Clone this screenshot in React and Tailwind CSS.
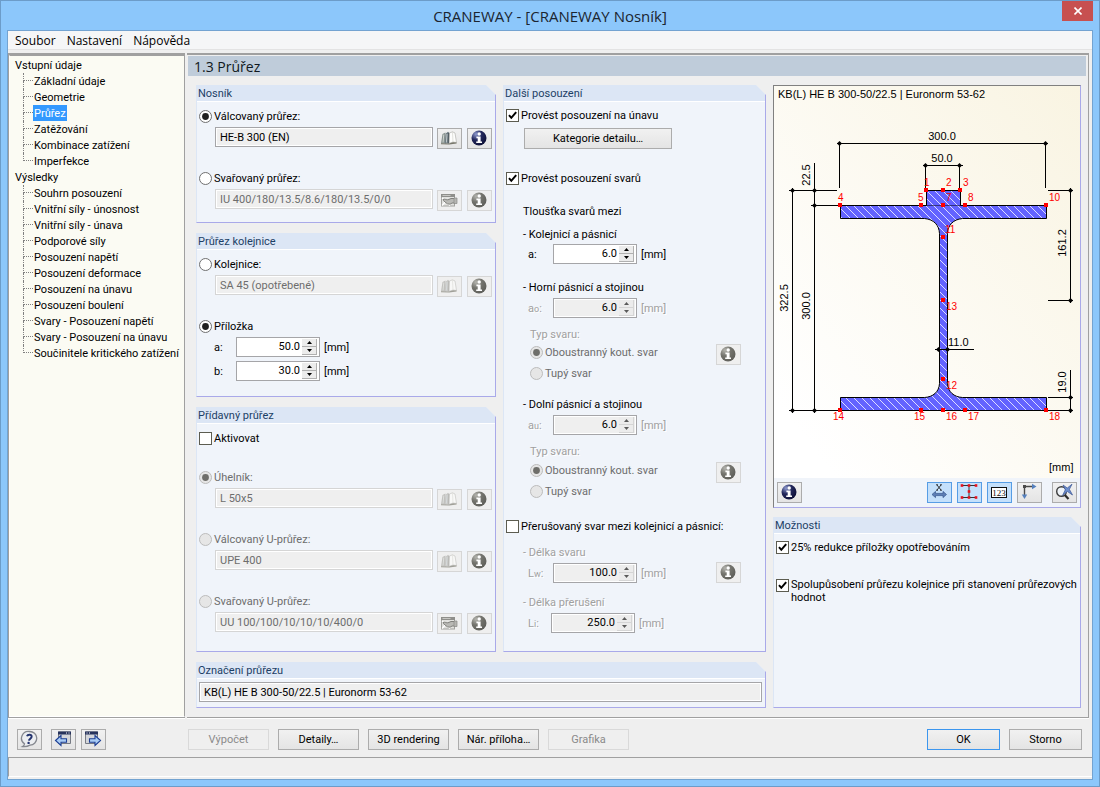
import { useId, useState } from "react";

/* ---------- icons ---------- */

function InfoIcon({ muted }) {
  const id = useId();
  return (
    <svg width="18" height="18" viewBox="0 0 18 18" aria-hidden="true">
      <defs>
        <radialGradient id={id} cx="0.3" cy="0.25" r="0.85">
          <stop offset="0" stopColor={muted ? "#b4b4ae" : "#8f9bd0"} />
          <stop offset="0.45" stopColor={muted ? "#74746e" : "#23285c"} />
          <stop offset="1" stopColor={muted ? "#5c5c57" : "#0b0d33"} />
        </radialGradient>
      </defs>
      <circle cx="9" cy="9" r="7.5" fill={`url(#${id})`} />
      <circle cx="9.2" cy="5" r="1.7" fill="#fff" />
      <path d="M6.4 7.6h4.2v4.8h1.4v1.6H6.2v-1.6h1.5V9.2H6.4z" fill="#fff" />
    </svg>
  );
}

function BookIcon({ muted }) {
  return (
    <svg width="18" height="16" viewBox="0 0 18 16" aria-hidden="true" opacity={muted ? 0.65 : 1}>
      <path d="M1 13.500 2.500 4 5.500 2.500 6 13.500z" fill={muted ? "#a9a9a5" : "#87928f"} />
      <path d="M3.800 4.500 3 12.500" stroke="#d9dcd8" strokeWidth="0.9" />
      <path d="M4.800 13.500 5.800 3.500 8 1.800 9.500 3 9 13.500z" fill={muted ? "#b4b4b0" : "#6d7a80"} />
      <path d="M7 4 6.400 12.500" stroke="#c9d0d2" strokeWidth="0.900" />
      <path d="M8.200 3 9.500 3 9 13 8 13.500z" fill={muted ? "#9a9a96" : "#4a555c"} />
      <path d="M9.500 3 12.500 1.800 15 3 16.500 12.500 13 12 9.200 13.200z" fill="#fdfdfc" stroke="#a8a8a2" strokeWidth="0.6" />
      <path d="M12.500 1.800 13 12" stroke="#d5d5cf" strokeWidth="0.700" />
      <path d="M1 13.200 9 13.400 13 12.300 16.600 12.400v1.200L9.200 14.400 1 14.200z" fill="#77766a" />
    </svg>
  );
}

function EditIcon() {
  return (
    <svg width="18" height="16" viewBox="0 0 18 16" aria-hidden="true">
      <rect x="1.500" y="2.500" width="13" height="11.500" fill="#e2e2df" stroke="#a2a29e" />
      <path d="M1 2h14v3H1z" fill="#8f8f8b" />
      <path d="M2.500 3.500h8" stroke="#c6c6c2" />
      <path d="M2 13.500 8 7M2 6l8 7.500" stroke="#fff" strokeWidth="1.200" />
      <path d="M3 7.500c2-.8 3.500.6 5 .3l3-1.300h3.500v4.500H12c-1.500 1.600-4 1.600-6-.2L3.500 8.600z" fill="#b9b9b5" stroke="#777773" strokeWidth="0.9" />
      <path d="M14 6h3v5.500h-3z" fill="#b5b5b1" stroke="#8a8a86" strokeWidth="0.700" />
    </svg>
  );
}

function HelpIcon() {
  return (
    <svg width="18" height="18" viewBox="0 0 18 18" aria-hidden="true">
      <path d="M9.500 1.500a7 6.800 0 0 1 .5 13.600C8 16.200 5 16.800 2.600 16.500c1.200-.6 1.800-1.600 1.900-2.700A6.900 6.800 0 0 1 9.500 1.500z" fill="#eceef1" stroke="#85888f" strokeWidth="1.300" />
      <path d="M7 6.300C7.600 4.100 12 4 11.600 6.800 11.300 8.700 9.200 8.700 8.900 10.600" fill="none" stroke="#24346f" strokeWidth="2" />
      <circle cx="8.600" cy="12.900" r="1.200" fill="#24346f" />
    </svg>
  );
}

function PageArrowIcon({ back }) {
  return (
    <svg width="18" height="18" viewBox="0 0 18 18" aria-hidden="true">
      <g transform={back ? undefined : "translate(18 0) scale(-1 1)"}>
        <path d="M4.500 2h12v11.500h-12z" fill="#d3d5da" stroke="#777b84" />
        <path d="M4 1.500h13v3H4z" fill="#26325c" />
        <path d="M12 3h1M14.500 3h1" stroke="#fff" />
        <path d="M1.500 10.500 7 5.500v3.300h5.500v3.400H7v3.300z" fill="#a9ccf5" stroke="#1e3f94" strokeWidth="1.100" />
      </g>
    </svg>
  );
}

function DimensionIcon() {
  return (
    <svg width="18" height="18" viewBox="0 0 18 18" aria-hidden="true">
      <path d="M7 2 11 7M11 2 7 7M6 1.800h2M10 1.800h2M6 7.200h2M10 7.200h2" stroke="#222" strokeWidth="0.900" />
      <path d="M2 11.500 5.500 8.400v2h7.500v-2l3.500 3.100-3.500 3.100v-2H5.500v2z" fill="#5d7fb5" stroke="#34558e" strokeWidth="0.700" />
    </svg>
  );
}

function SectionIcon() {
  const pts = [[2, 2.500], [9, 2.500], [16, 2.500], [9, 8.500], [2, 14.500], [9, 14.500], [16, 14.500]];
  return (
    <svg width="18" height="18" viewBox="0 0 18 18" aria-hidden="true">
      <path d="M2 2.500h14M2 14.500h14M9 2.500v12" stroke="#333" />
      {pts.map(([x, y]) => (
        <rect key={`${x}-${y}`} x={x - 1.300} y={y - 1.300} width="2.600" height="2.600" fill="#e8101c" />
      ))}
    </svg>
  );
}

function NumbersIcon() {
  return (
    <svg width="18" height="18" viewBox="0 0 18 18" aria-hidden="true">
      <rect x="1.500" y="4.500" width="15" height="10" fill="#fff" stroke="#111" />
      <text x="9" y="13" textAnchor="middle" fontSize="9" fontFamily="Liberation Serif, serif" fill="#111">123</text>
    </svg>
  );
}

function AxesIcon() {
  return (
    <svg width="18" height="18" viewBox="0 0 18 18" aria-hidden="true">
      <path d="M4.500 13V3.500H14" fill="none" stroke="#4a4a4a" strokeWidth="1.400" />
      <path d="M3 2h3v3H3z" fill="#4a4a4a" />
      <path d="M12 .8 16.500 3.500 12 6.200z" fill="#5580bd" />
      <path d="M1.800 11.500 4.500 16l2.700-4.500z" fill="#5580bd" />
    </svg>
  );
}

function ResetViewIcon() {
  return (
    <svg width="18" height="18" viewBox="0 0 18 18" aria-hidden="true">
      <circle cx="6.500" cy="8.500" r="4.800" fill="#eef3f8" stroke="#3c3c3c" strokeWidth="1.400" />
      <path d="M9.800 12 13.500 16" stroke="#2b2b2b" strokeWidth="2.200" />
      <path d="M8 2 12.300 5 17 1.200 14.400 6.300 17.500 12l-5.200-3.600L7.500 12.500l2.800-5.700z" fill="#6d8fce" stroke="#3a5594" strokeWidth="0.700" />
    </svg>
  );
}

/* ---------- controls ---------- */

const TEXT = {
  normal: "text-black",
  muted: "text-[#6d6d6d]",
  etched: "text-[#a0a0a0] [text-shadow:1px_1px_0_#ffffff]",
};

function Line({ className = "", children }) {
  return <p className={`h-4 whitespace-nowrap pt-px ${className}`}>{children}</p>;
}

function Choice({ type, label, name, checked, disabled, mutedText, lines }) {
  const id = useId();
  const radio = type === "radio";
  const shape = radio ? "rounded-full" : "";
  const tone = disabled
    ? "border-[#bcbcbc] bg-[#e6e6e6]"
    : radio
      ? "border-[#707070] bg-white"
      : "border-[#5c5c50] bg-white";
  const [on, setOn] = useState(Boolean(checked));
  const extra = radio
    ? { defaultChecked: checked }
    : { checked: on, onChange: () => setOn(!on) };
  return (
    <div className={`flex gap-[2px] ${lines ? "items-start" : "h-4 items-center"}`}>
      <span className={`grid size-[13px] shrink-0 ${lines ? "mt-[2px]" : ""}`}>
        <input
          id={id}
          type={type}
          name={name}
          disabled={disabled}
          className={`peer col-start-1 row-start-1 m-0 size-[13px] appearance-none border ${shape} ${tone}`}
          {...extra}
        />
        <svg
          viewBox="0 0 13 13"
          className="pointer-events-none invisible col-start-1 row-start-1 size-[13px] peer-checked:visible"
          aria-hidden="true"
        >
          {radio ? (
            <circle cx="6.500" cy="6.500" r="3.400" fill={disabled ? "#6e6e6a" : "#1f1f1f"} />
          ) : (
            <path d="M3 6.200 5.300 8.800 10.200 3.200" fill="none" stroke="#000" strokeWidth="2" />
          )}
        </svg>
      </span>
      <label
        htmlFor={id}
        className={`${lines ? "pt-px leading-[13px]" : "whitespace-nowrap pt-0.5"} ${mutedText ? TEXT.muted : TEXT.normal}`}
      >
        {label}
      </label>
    </div>
  );
}

function Field({ value, label, disabled }) {
  return (
    <input
      type="text"
      aria-label={label}
      defaultValue={value}
      readOnly
      disabled={disabled}
      className={`h-5 min-w-0 flex-1 border bg-[#efefef] px-1 shadow-[inset_0_0_0_1px_#ffffff] ${
        disabled ? "border-[#d5d5d5] text-[#6d6d6d]" : "border-[#a5a5a8] text-black"
      }`}
    />
  );
}

function IconButton({ label, disabled, active, children }) {
  const tone = disabled
    ? "border-[#d6d6d6] bg-[#efefef]"
    : active
      ? "border-[#569de5] bg-[#c4e0fb]"
      : "border-[#acacac] bg-linear-to-b from-[#f1f1f1] to-[#e4e4e4]";
  return (
    <button
      type="button"
      aria-label={label}
      disabled={disabled}
      className={`flex h-[21px] w-[25px] shrink-0 items-center justify-center border pr-px pb-px ${tone}`}
    >
      {children}
    </button>
  );
}

function PushButton({ children, width = "w-[81px]", disabled, primary }) {
  const tone = disabled
    ? "border-[#d9d9d9] bg-[#efefef] text-[#8a8a8a]"
    : primary
      ? "border-[#3c96ee] bg-linear-to-b from-[#f1f1f1] to-[#e4e4e4]"
      : "border-[#acacac] bg-linear-to-b from-[#f1f1f1] to-[#e4e4e4]";
  return (
    <button type="button" disabled={disabled} className={`h-[21px] whitespace-nowrap border pt-px ${width} ${tone}`}>
      {children}
    </button>
  );
}

function Stepper({ label, value, disabled, labelWidth }) {
  const id = useId();
  const [amount, setAmount] = useState(value);
  const step = (d) => setAmount((Number(amount) + d).toFixed(1));
  const arrow = disabled ? "#5a5a5a" : "#000";
  const btn = `flex h-[8px] w-[15px] items-center justify-center border-r border-b bg-[#ececec] ${
    disabled ? "border-[#d5d5d5]" : "border-[#b0b0b0]"
  }`;
  return (
    <div className="flex h-5 items-center">
      <label htmlFor={id} className={`pt-0.5 ${labelWidth} ${disabled ? TEXT.etched : TEXT.normal}`}>
        {label}
      </label>
      <span
        className={`flex h-5 w-[84px] items-center border border-[#a5a5a8] pr-[2px] ${
          disabled ? "bg-[#efefef] shadow-[inset_0_0_0_1px_#ffffff]" : "bg-white"
        }`}
      >
        <input
          id={id}
          type="text"
          value={amount}
          disabled={disabled}
          onChange={(e) => setAmount(e.target.value)}
          className="h-4 min-w-0 flex-1 bg-transparent pr-[2px] text-right text-black"
        />
        <span className="flex flex-col">
          <button type="button" aria-label="+" disabled={disabled} onClick={() => step(1)} className={btn}>
            <svg width="5" height="3" viewBox="0 0 5 3"><path d="M0 3 2.500 0 5 3z" fill={arrow} /></svg>
          </button>
          <button type="button" aria-label="-" disabled={disabled} onClick={() => step(-1)} className={btn}>
            <svg width="5" height="3" viewBox="0 0 5 3"><path d="M0 0 2.500 3 5 0z" fill={arrow} /></svg>
          </button>
        </span>
      </span>
      <span className={`pt-0.5 pl-1 ${disabled ? TEXT.etched : TEXT.normal}`}>[mm]</span>
    </div>
  );
}

function Group({ title, className = "", children }) {
  return (
    <section
      className={`flex flex-col border-r border-b border-l border-r-[#a9a9e9] border-b-[#a9a9e9] border-l-[#dce6f5] bg-[#f0f4fa] [clip-path:polygon(0_0,calc(100%-10px)_0,100%_10px,100%_100%,0_100%)] ${className}`}
    >
      <h2 className="h-[17px] border-b border-white bg-[#dce6f5] pt-px pl-px leading-4 text-[#1d3f66]">{title}</h2>
      {children}
    </section>
  );
}

function SectionPicker({ label, value, name, checked, fieldDisabled, radioDisabled, edit }) {
  return (
    <div className="flex flex-col gap-[3px]">
      <Choice type="radio" name={name} label={label} checked={checked} disabled={radioDisabled} mutedText={radioDisabled} />
      <div className="flex h-[22px] items-start pl-4">
        <Field value={value} label={label} disabled={fieldDisabled} />
        <div className="flex gap-[5px] pt-px pl-1">
          <IconButton label={edit ? "Upravit" : "Knihovna"} disabled={fieldDisabled}>
            {edit ? <EditIcon /> : <BookIcon muted={fieldDisabled} />}
          </IconButton>
          <IconButton label="Informace" disabled={fieldDisabled}>
            <InfoIcon muted={fieldDisabled} />
          </IconButton>
        </div>
      </div>
    </div>
  );
}

function WeldType({ name, gap = "gap-[2px]" }) {
  return (
    <div className={`mt-2 flex flex-col pr-6 pl-6 ${gap}`}>
      <Line className={TEXT.etched}>Typ svaru:</Line>
      <div className="flex items-start justify-between">
        <div className="flex flex-col gap-[5px]">
          <Choice type="radio" name={name} label="Oboustranný kout. svar" checked disabled mutedText />
          <Choice type="radio" name={name} label="Tupý svar" disabled mutedText />
        </div>
        <IconButton label="Informace" disabled>
          <InfoIcon muted />
        </IconButton>
      </div>
    </div>
  );
}

/* ---------- navigation ---------- */

const TREE = [
  {
    title: "Vstupní údaje",
    items: ["Základní údaje", "Geometrie", "Průřez", "Zatěžování", "Kombinace zatížení", "Imperfekce"],
  },
  {
    title: "Výsledky",
    items: [
      "Souhrn posouzení",
      "Vnitřní síly - únosnost",
      "Vnitřní síly - únava",
      "Podporové síly",
      "Posouzení napětí",
      "Posouzení deformace",
      "Posouzení na únavu",
      "Posouzení boulení",
      "Svary - Posouzení napětí",
      "Svary - Posouzení na únavu",
      "Součinitele kritického zatížení",
    ],
  },
];

function Tree() {
  return (
    <nav className="flex-1 border border-white border-t-[#a0a0a0] border-r-[#a0a0a0] bg-[#fbfbf3] pt-px pl-[5px]">
      <ul>
        {TREE.map((branch) => (
          <li key={branch.title}>
            <Line>{branch.title}</Line>
            <ul className="pl-2">
              {branch.items.map((item, i) => (
                <li key={item} className="flex h-4">
                  <span className="flex w-[10px] shrink-0 flex-col" aria-hidden="true">
                    <span className="h-2 border-b border-l border-dotted border-[#808080]" />
                    {i < branch.items.length - 1 && (
                      <span className="h-2 border-l border-dotted border-[#808080]" />
                    )}
                  </span>
                  <a
                    href="#"
                    className={`h-4 whitespace-nowrap px-px pt-px ${item === "Průřez" ? "bg-[#3399ff] text-white" : ""}`}
                  >
                    {item}
                  </a>
                </li>
              ))}
            </ul>
          </li>
        ))}
      </ul>
    </nav>
  );
}

/* ---------- cross-section drawing ---------- */

const POINTS = [
  [1, 152, 104, 150, 100],
  [2, 169, 104, 172, 100],
  [3, 186, 104, 189, 100],
  [4, 66, 119, 64, 115],
  [5, 147, 119, 144, 115],
  [7, 169, 119, 172, 115],
  [8, 191, 119, 194, 115],
  [10, 272, 119, 275, 115],
  [11, 169, 151, 171, 147],
  [13, 169, 214, 172, 224],
  [12, 169, 293, 172, 303],
  [14, 66, 324, 59, 334],
  [15, 147, 324, 140, 334],
  [16, 169, 324, 172, 334],
  [17, 191, 324, 194, 334],
  [18, 272, 324, 275, 334],
];

const DOTS = [
  [65.500, 57.500], [271.500, 57.500], [151.500, 79.500], [185.500, 79.500],
  [40.500, 104.500], [40.500, 119.500], [40.500, 324.500], [18.500, 104.500], [18.500, 324.500],
  [296.500, 104.500], [296.500, 214.500], [296.500, 311.500], [296.500, 324.500],
  [164.500, 263.500], [173.500, 263.500],
];

function SectionDrawing() {
  return (
    <svg viewBox="0 0 306 392" className="block h-auto w-full" fontFamily="Liberation Sans, sans-serif" role="img" aria-label="Průřez">
      <defs>
        <linearGradient id="paper" x1="0" y1="1" x2="1" y2="0">
          <stop offset="0.100" stopColor="#ffffff" />
          <stop offset="1" stopColor="#f9f4e2" />
        </linearGradient>
        <pattern id="hatch" width="8" height="8" patternUnits="userSpaceOnUse">
          <rect width="8" height="8" fill="#6363ff" />
          <path d="M-1-1 9 9M-1 7l2 2M7-1l2 2" stroke="#dcdcff" strokeWidth="1" />
        </pattern>
      </defs>
      <rect width="306" height="392" fill="url(#paper)" />
      <path
        d="M66.500 119.500H272.500V132.500H188.500C179 133.500 174 139 173.500 147.500V297.500C174 306 180 311 188.500 311.500H272.500V324.500H66.500V311.500H150.500C159 311 165 306 165.500 297.500V147.500C165 139 160 133.500 150.500 132.500H66.500Z"
        fill="url(#hatch)"
        stroke="#000"
      />
      <path d="M152.500 119.500V104.500H186.500V119.500" fill="url(#hatch)" stroke="#000" />
      <path
        d="M63 57.500H274M65.500 57V102M271.500 57V102M149 79.500H189M151.500 79V104M185.500 79V104M40.500 77V327M18.500 102V327M15 104.500H63M37 119.500H66M15 324.500H66M296.500 102V217M274 104.500H299M274 214.500H299M296.500 284V327M274 311.500H299M274 324.500H299M161 263.500H200"
        stroke="#000"
      />
      {DOTS.map(([x, y]) => (
        <path key={`${x}-${y}`} d={`M${x - 2.500} ${y}L${x} ${y - 2.500}L${x + 2.500} ${y}L${x} ${y + 2.500}Z`} />
      ))}
      {POINTS.map(([n, x, y, tx, ty]) => (
        <g key={n} fill="#ff0000">
          <rect x={x - 2} y={y - 2} width="4" height="4" />
          <text x={tx} y={ty} fontSize="10">{n}</text>
        </g>
      ))}
      <g fontSize="11" fill="#000">
        <text x="4" y="12">KB(L) HE B 300-50/22.5 | Euronorm 53-62</text>
        <text x="168" y="54" textAnchor="middle">300.0</text>
        <text x="168" y="76" textAnchor="middle">50.0</text>
        <text x="174" y="260">11.0</text>
        <text x="275" y="385">[mm]</text>
        <text transform="translate(36 89) rotate(-90)" textAnchor="middle">22.5</text>
        <text transform="translate(14 212) rotate(-90)" textAnchor="middle">322.5</text>
        <text transform="translate(36 220) rotate(-90)" textAnchor="middle">300.0</text>
        <text transform="translate(292 157) rotate(-90)" textAnchor="middle">161.2</text>
        <text transform="translate(292 296) rotate(-90)" textAnchor="middle">19.0</text>
      </g>
    </svg>
  );
}

/* ---------- page ---------- */

export default function App() {
  return (
    <div className="flex min-h-screen flex-col border border-[#6c9cc9] bg-[#8cc7fb] px-1.5 pb-1.5 font-['Roboto','Noto_Sans',sans-serif] text-[11px] leading-4 text-black">
      <header className="grid h-[29px] grid-cols-[1fr_auto_1fr] items-center">
        <h1 className="col-start-2 font-['Open_Sans',sans-serif] text-[15px] text-[#1b2530]">
          CRANEWAY - [CRANEWAY Nosník]
        </h1>
        <button
          type="button"
          aria-label="Zavřít"
          className="flex h-5 w-[31px] items-center justify-center self-start justify-self-end bg-[#c75050]"
        >
          <svg width="8" height="8" viewBox="0 0 8 8" aria-hidden="true">
            <path d="M.5.5l7 7M7.500.5l-7 7" stroke="#fff" strokeWidth="1.600" />
          </svg>
        </button>
      </header>

      <div className="flex flex-1 flex-col border border-[#73a3d1] bg-[#efefef]">
        <nav className="mb-[3px] flex h-[19px] items-center gap-[11px] border-b border-[#e3e3e3] bg-[#f5f6f7] px-[7px] pt-px font-['Open_Sans',sans-serif] text-xs">
          <button type="button">Soubor</button>
          <button type="button">Nastavení</button>
          <button type="button">Nápověda</button>
        </nav>

        <div className="flex flex-1">
          <aside className="flex w-[179px] shrink-0 flex-col pr-[2px]">
            <div className="flex flex-1 flex-col border-t-2 border-b border-l border-[#a0a0a0]">
              <Tree />
            </div>
            <div className="h-px bg-white" />
          </aside>

          <main className="mr-[3px] flex min-w-0 flex-1 flex-col border-b border-white">
            <div className="flex flex-1 flex-col border-t-2 border-r border-b border-[#a0a0a0]">
              <h2 className="mt-px mr-[2px] ml-px h-5 bg-[#bfccda] pl-[6px] font-['Open_Sans',sans-serif] text-sm leading-[21px] text-[#101820]">
                1.3 Průřez
              </h2>

              <div className="grid flex-1 grid-cols-[570fr_308fr] gap-[7px] pt-[9px] pr-[7px] pb-[9px] pl-[9px]">
                <div className="flex flex-col gap-[10px]">
                  <div className="grid flex-1 grid-cols-[300fr_263fr] gap-[7px]">
                    <div className="flex flex-col gap-[10px]">
                      <Group title="Nosník">
                        <div className="flex flex-col gap-[21px] pt-[6px] pr-[3px] pb-[11px] pl-[2px]">
                          <SectionPicker name="beam" label="Válcovaný průřez:" value="HE-B 300 (EN)" checked />
                          <SectionPicker name="beam" label="Svařovaný průřez:" value="IU 400/180/13.5/8.6/180/13.5/0/0" fieldDisabled edit />
                        </div>
                      </Group>

                      <Group title="Průřez kolejnice">
                        <div className="flex flex-col gap-[21px] pt-[6px] pr-[3px] pb-[15px] pl-[2px]">
                          <SectionPicker name="rail" label="Kolejnice:" value="SA 45 (opotřebené)" fieldDisabled />
                          <div className="flex flex-col gap-[3px]">
                            <Choice type="radio" name="rail" label="Příložka" checked />
                            <div className="flex flex-col gap-1 pl-[15px]">
                              <Stepper label="a:" value="50.0" labelWidth="w-[22px]" />
                              <Stepper label="b:" value="30.0" labelWidth="w-[22px]" />
                            </div>
                          </div>
                        </div>
                      </Group>

                      <Group title="Přídavný průřez" className="flex-1">
                        <div className="flex flex-col pt-[6px] pr-[3px] pl-[2px]">
                          <Choice type="checkbox" label="Aktivovat" />
                          <div className="mt-[23px] flex flex-col gap-[21px]">
                            <SectionPicker name="extra" label="Úhelník:" value="L 50x5" checked fieldDisabled radioDisabled />
                            <SectionPicker name="extra" label="Válcovaný U-průřez:" value="UPE 400" fieldDisabled radioDisabled />
                            <SectionPicker name="extra" label="Svařovaný U-průřez:" value="UU 100/100/10/10/10/400/0" fieldDisabled radioDisabled edit />
                          </div>
                        </div>
                      </Group>
                    </div>

                    <Group title="Další posouzení">
                      <div className="flex flex-col pt-[5px] pl-[2px]">
                        <Choice type="checkbox" label="Provést posouzení na únavu" checked />
                        <div className="mt-[5px] flex pl-[18px]">
                          <PushButton width="w-[148px]">Kategorie detailu…</PushButton>
                        </div>
                        <div className="mt-[21px]">
                          <Choice type="checkbox" label="Provést posouzení svarů" checked />
                        </div>
                        <Line className="mt-[17px] pl-[17px]">Tloušťka svarů mezi</Line>
                        <Line className="mt-[7px] pl-[17px]">- Kolejnicí a pásnicí</Line>
                        <div className="mt-[2px] pl-[22px]">
                          <Stepper label="a:" value="6.0" labelWidth="w-[25px]" />
                        </div>
                        <Line className="mt-[15px] pl-[17px]">- Horní pásnicí a stojinou</Line>
                        <div className="mt-[3px] pl-[22px]">
                          <Stepper label={<>a<span className="text-[9px]">o</span>:</>} value="6.0" disabled labelWidth="w-[25px]" />
                        </div>
                        <WeldType name="weld-top" />
                        <Line className="mt-[15px] pl-[17px]">- Dolní pásnicí a stojinou</Line>
                        <div className="mt-[3px] pl-[22px]">
                          <Stepper label={<>a<span className="text-[9px]">u</span>:</>} value="6.0" disabled labelWidth="w-[25px]" />
                        </div>
                        <WeldType name="weld-bottom" gap="gap-[3px]" />
                        <div className="mt-[19px]">
                          <Choice type="checkbox" label="Přerušovaný svar mezi kolejnicí a pásnicí:" />
                        </div>
                        <Line className={`mt-[10px] pl-[17px] ${TEXT.etched}`}>- Délka svaru</Line>
                        <div className="mt-[2px] flex items-center justify-between pr-6 pl-[22px]">
                          <Stepper label={<>L<span className="text-[9px]">w</span>:</>} value="100.0" disabled labelWidth="w-[25px]" />
                          <IconButton label="Informace" disabled>
                            <InfoIcon muted />
                          </IconButton>
                        </div>
                        <Line className={`mt-[11px] pl-[17px] ${TEXT.etched}`}>- Délka přerušení</Line>
                        <div className="mt-[3px] pl-[22px]">
                          <Stepper label={<>L<span className="text-[9px]">i</span>:</>} value="250.0" disabled labelWidth="w-[23px]" />
                        </div>
                      </div>
                    </Group>
                  </div>

                  <Group title="Označení průřezu">
                    <div className="flex pt-[3px] pr-[3px] pb-[5px] pl-[2px]">
                      <Field label="Označení průřezu" value="KB(L) HE B 300-50/22.5 | Euronorm 53-62" />
                    </div>
                  </Group>
                </div>

                <div className="flex flex-col gap-[9px]">
                  <section className="border border-t-[#808080] border-r-[#a9a9e9] border-b-[#a9a9e9] border-l-[#808080] bg-[#f0f4fa]">
                    <SectionDrawing />
                    <div className="flex items-center py-1 pr-[3px] pl-[3px]">
                      <IconButton label="Informace"><InfoIcon /></IconButton>
                      <div className="ml-auto flex gap-[5px]">
                        <IconButton label="Kóty" active><DimensionIcon /></IconButton>
                        <IconButton label="Body napětí" active><SectionIcon /></IconButton>
                        <IconButton label="Číslování" active><NumbersIcon /></IconButton>
                        <IconButton label="Osy"><AxesIcon /></IconButton>
                      </div>
                      <div className="pl-[10px]">
                        <IconButton label="Celý pohled"><ResetViewIcon /></IconButton>
                      </div>
                    </div>
                  </section>

                  <Group title="Možnosti" className="flex-1">
                    <div className="flex flex-col gap-[22px] pt-[5px] pl-[2px]">
                      <Choice type="checkbox" label="25% redukce příložky opotřebováním" checked />
                      <Choice
                        type="checkbox"
                        lines
                        label="Spolupůsobení průřezu kolejnice při stanovení průřezových hodnot"
                        checked
                      />
                    </div>
                  </Group>
                </div>
              </div>
            </div>
          </main>
        </div>

        <footer>
          <div className="flex pt-[10px] pr-[10px] pb-[7px]">
            <div className="flex w-[180px] shrink-0 gap-[5px] pl-[9px]">
              <div className="pr-1">
                <IconButton label="Nápověda"><HelpIcon /></IconButton>
              </div>
              <IconButton label="Předchozí"><PageArrowIcon back /></IconButton>
              <IconButton label="Další"><PageArrowIcon /></IconButton>
            </div>
            <div className="flex gap-[9px]">
              <PushButton disabled>Výpočet</PushButton>
              <PushButton>Detaily…</PushButton>
              <PushButton>3D rendering</PushButton>
              <PushButton>Nár. příloha…</PushButton>
              <PushButton disabled>Grafika</PushButton>
            </div>
            <div className="ml-auto flex gap-[9px]">
              <PushButton width="w-[73px]" primary>OK</PushButton>
              <PushButton width="w-[73px]">Storno</PushButton>
            </div>
          </div>
          <div className="mb-[2px] h-5 border-t border-b border-l border-t-[#a0a0a0] border-b-white border-l-[#a0a0a0]" />
        </footer>
      </div>
    </div>
  );
}
